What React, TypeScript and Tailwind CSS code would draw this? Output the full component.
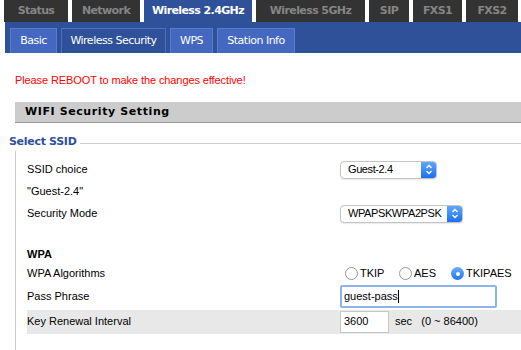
import React from 'react';

const topTabs = [
  { label: 'Status', w: 'w-[64px]' },
  { label: 'Network', w: 'w-[68px]' },
  { label: 'Wireless 2.4GHz', w: 'w-[108px]', active: true },
  { label: 'Wireless 5GHz', w: 'w-[109px]' },
  { label: 'SIP', w: 'w-[40px]' },
  { label: 'FXS1', w: 'w-[49px]' },
  { label: 'FXS2', w: 'w-[52px]' },
];

const subTabs = [
  { label: 'Basic', w: 'w-[47px]' },
  { label: 'Wireless Security', w: 'w-[105px]', active: true },
  { label: 'WPS', w: 'w-[43px]' },
  { label: 'Station Info', w: 'w-[78px]' },
];

const SelectBox: React.FC<{ value: string; width: string }> = ({ value, width }) => (
  <div className={`${width} h-[18px] flex items-center border border-[#c4c4c4] rounded-[4px] bg-white overflow-hidden shadow-[0_1px_1px_rgba(0,0,0,0.08)]`}>
    <span className="flex-1 pl-[7px] text-[11px] tracking-[-0.4px] text-black leading-none whitespace-nowrap">{value}</span>
    <span className="w-[15px] h-full shrink-0 bg-gradient-to-b from-[#5ea6ff] to-[#1a6ff0] flex items-center justify-center">
      <svg width="8" height="11" viewBox="0 0 8 11" fill="none" stroke="white" strokeWidth="1.4">
        <path d="M1.5 4 L4 1.5 L6.5 4" />
        <path d="M1.5 7 L4 9.5 L6.5 7" />
      </svg>
    </span>
  </div>
);

const Radio: React.FC<{ label: string; checked?: boolean; gap: string }> = ({ label, checked, gap }) => (
  <span className={`flex items-center ${gap}`}>
    {checked ? (
      <span className="w-[13px] h-[13px] rounded-full bg-gradient-to-b from-[#69adff] to-[#1f74f0] flex items-center justify-center">
        <span className="w-[4px] h-[4px] rounded-full bg-white" />
      </span>
    ) : (
      <span className="w-[13px] h-[13px] rounded-full border border-[#9a9a9a] bg-white" />
    )}
    <span className="ml-[2px] text-[11px] text-black">{label}</span>
  </span>
);

export default function App() {
  return (
    <div className="w-[521px] h-[350px] bg-white overflow-hidden relative" style={{ fontFamily: '"Liberation Sans", Arial, sans-serif' }}>
      {/* top tabs */}
      <div className="flex h-[22px] pl-[4px] gap-[4px]" style={{ fontFamily: '"DejaVu Sans", Verdana, sans-serif' }}>
        {topTabs.map((t) => (
          <div
            key={t.label}
            className={`${t.w} h-full flex items-center justify-center text-[11px] font-bold tracking-[-0.6px] ${
              t.active ? 'bg-[#2f5199] text-white' : 'bg-[#333333] text-[#858585]'
            }`}
          >
            {t.label}
          </div>
        ))}
      </div>

      {/* sub tabs */}
      <div className="ml-[5px] h-[31px] bg-[#2f5199] flex items-end pl-[5px] gap-[4px]" style={{ fontFamily: '"DejaVu Sans", Verdana, sans-serif' }}>
        {subTabs.map((t) => (
          <div
            key={t.label}
            className={`${t.w} h-[25px] flex items-center justify-center text-[11px] tracking-[-0.5px] text-white border border-b-0 ${
              t.active ? 'bg-[#2f5199] border-[#4a6fc4]' : 'bg-[#4468bf] border-[#5a7ccc]'
            }`}
          >
            {t.label}
          </div>
        ))}
      </div>

      <p className="mt-[20px] ml-[15px] text-[11px] leading-[14px] tracking-[-0.1px] text-[#ff0000]">Please REBOOT to make the changes effective!</p>

      <div
        className="mt-[15px] ml-[15px] h-[21px] bg-[#cccccc] border-b border-[#999999] flex items-center pl-[10px] text-[11px] font-bold tracking-[0.6px] text-black"
        style={{ fontFamily: '"DejaVu Sans", Verdana, sans-serif' }}
      >
        WIFI Security Setting
      </div>

      {/* fieldset */}
      <div className="mt-[11px] flex items-center">
        <span className="ml-[9px] text-[11px] font-bold text-[#2f5199] tracking-[-0.3px]" style={{ fontFamily: '"DejaVu Sans", Verdana, sans-serif' }}>
          Select SSID
        </span>
        <span className="flex-1 ml-[3px] mt-[3px] h-px bg-[#cccccc]" />
      </div>

      <div className="ml-[15px] border-l border-[#cccccc] pl-[11px] h-[220px] text-[11px] text-black">
        <div className="h-[9px]" />
        <div className="flex items-center h-[20px]">
          <span className="w-[313px]">SSID choice</span>
          <SelectBox value="Guest-2.4" width="w-[97px]" />
        </div>
        <div className="flex items-center h-[24px]">"Guest-2.4"</div>
        <div className="flex items-center h-[20px]">
          <span className="w-[313px]">Security Mode</span>
          <SelectBox value="WPAPSKWPA2PSK" width="w-[123px]" />
        </div>
        <div className="h-[22px]" />
        <div className="flex items-center h-[18px] font-bold">WPA</div>
        <div className="flex items-center h-[20px]">
          <span className="w-[318px]">WPA Algorithms</span>
          <Radio label="TKIP" gap="w-[54px]" />
          <Radio label="AES" gap="w-[52px]" />
          <Radio label="TKIPAES" checked gap="" />
        </div>
        <div className="flex items-center h-[25px]">
          <span className="w-[313px]">Pass Phrase</span>
          <div className="w-[157px] h-[23px] border-[2px] border-[#8db3e8] rounded-[2px] flex items-center pl-[2px] bg-white">
            <span>guest-pass</span>
            <span className="w-px h-[13px] bg-black" />
          </div>
        </div>
        <div className="flex items-center h-[24px] mt-[1px] bg-[#e8e8e8]">
          <span className="w-[313px]">Key Renewal Interval</span>
          <div className="w-[49px] h-[22px] border border-[#c8c8c8] bg-white flex items-center pl-[3px]">3600</div>
          <span className="ml-[6px] whitespace-pre">sec   (0 ~ 86400)</span>
        </div>
      </div>
    </div>
  );
}
